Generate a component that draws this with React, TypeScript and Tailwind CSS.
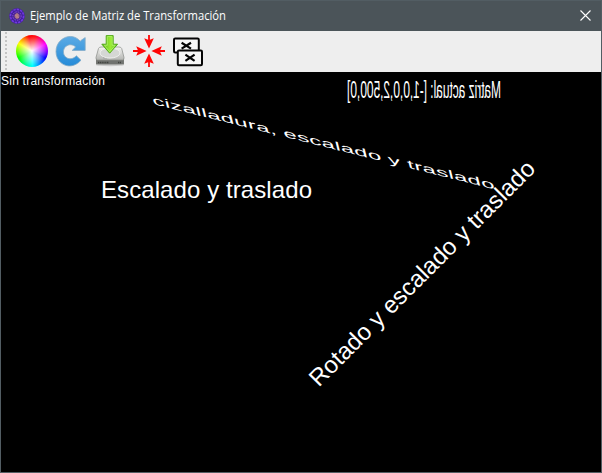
import React from "react";

type Label = { text: string; matrix: string; length: number };

// Each caption is drawn at (0, 13) in its own transformed space.
const labels: Label[] = [
  { text: "Sin transformación", matrix: "matrix(1 0 0 1 0 0)", length: 104 },
  { text: "Escalado y traslado", matrix: "matrix(2 0 0 2 100 100)", length: 105.5 },
  { text: "Rotado y escalado y traslado", matrix: "matrix(1.4142 -1.4142 1.4142 1.4142 299.5 297.5)", length: 154 },
  { text: "cizalladura, escalado y traslado", matrix: "matrix(2 0.5 0.25 1 149 19)", length: 171 },
  { text: "Matriz actual: [-1,0,0,2,500,0]", matrix: "matrix(-1 0 0 2 500 0)", length: 154 },
];

function AppIcon() {
  return (
    <svg className="h-4 w-4" viewBox="0 0 16 16">
      <circle cx="8" cy="8" r="7.8" fill="#42209c" />
      <circle cx="8" cy="8" r="6.6" fill="none" stroke="#7138e0" strokeWidth="1.6" strokeDasharray="2.4 1" />
      <circle cx="8" cy="8" r="4.2" fill="#4b2790" stroke="#8a4be0" strokeWidth="1" strokeDasharray="1.5 1" />
      <circle cx="8" cy="8" r="2.5" fill="#a46b8c" />
      <path d="M8 5v6M6 7l4 3" stroke="#c08a80" strokeWidth=".9" />
    </svg>
  );
}

function ColorWheel() {
  return (
    <div className="h-8 w-8 rounded-full bg-[radial-gradient(circle,#ffffff_0%,#ffffffb0_20%,#ffffff00_66%),conic-gradient(from_-12deg,#ff0000_0deg,#ff1010_24deg,#ff0090_50deg,#ff00ff_75deg,#8000ff_105deg,#0000ff_130deg,#0080ff_160deg,#00ffff_190deg,#00ff90_220deg,#00ff00_255deg,#80ff00_285deg,#ffff00_312deg,#ff8000_338deg,#ff0000_360deg)]" />
  );
}

function RedoIcon() {
  return (
    <svg className="h-8 w-8" viewBox="0 0 32 32">
      <defs>
        <linearGradient id="redo" x1="0" y1="0" x2="0" y2="1">
          <stop offset="0" stopColor="#5baae4" />
          <stop offset="1" stopColor="#258bd8" />
        </linearGradient>
      </defs>
      <path
        d="M26.3 5.2 30.2 2.6V15.4H17.2L20.6 12C18 9.2 13.9 9 11 11.3C7.6 14.2 7.6 19.6 11 22.3C14.1 24.7 18.4 24 21.4 20.8L26 25.2C20.3 32 11.6 32.6 6 27.8C-.6 22.3-.6 11.3 5.6 5.5C11.6-.1 20.1.1 25.2 6.2Z"
        fill="url(#redo)"
        stroke="#83abc6"
        strokeWidth=".8"
      />
    </svg>
  );
}

function DriveIcon() {
  return (
    <svg className="h-8 w-8" viewBox="0 0 32 32">
      <defs>
        <linearGradient id="drive" x1="0" y1="0" x2="0" y2="1">
          <stop offset="0" stopColor="#f5f5f3" />
          <stop offset="1" stopColor="#b4b5b2" />
        </linearGradient>
        <linearGradient id="arrow" x1="0" y1="0" x2="1" y2="0">
          <stop offset="0" stopColor="#58b515" />
          <stop offset=".55" stopColor="#9aeb35" />
          <stop offset="1" stopColor="#61c51a" />
        </linearGradient>
      </defs>
      <ellipse cx="16" cy="30" rx="14" ry="1.2" fill="#cacaca" />
      <path d="M6.5 12.5H25.5L30 24V29.5H2V24Z" fill="#7c7e7b" />
      <path d="M7 12H25Q27 12 27.7 13.5L30 22.5Q30.3 25 28.5 25H3.5Q1.7 25 2 22.5L4.5 13.5Q5.2 12 7 12Z" fill="url(#drive)" stroke="#929491" strokeWidth=".8" />
      <ellipse cx="16" cy="18" rx="10" ry="5" fill="#d5d7d4" stroke="#eeeeec" />
      <path d="M10 22Q8 24 13 24" fill="none" stroke="#a9aaa8" />
      <path d="M2.5 25.5H29.5V29H2.5Z" fill="#70726f" />
      <path d="M4 27.5H15M24 27.5H27" stroke="#41433f" strokeWidth="1.4" strokeDasharray="1.2 .6" />
      <path d="M12.2 .6H19.2V9.2H23.6L15.7 18.2 7.8 9.2H12.2Z" fill="url(#arrow)" stroke="#4ca414" strokeWidth=".9" />
      <path d="M13.3 1.6H18.1V10.3H21.2L15.7 16.7 10.3 10.3H13.3Z" fill="none" stroke="#b7f576" strokeWidth=".7" />
    </svg>
  );
}

function CollapseIcon() {
  return (
    <svg className="h-8 w-8" viewBox="0 0 32 32" fill="#ff0505">
      {[0, 90, 180, 270].map((angle) => (
        <path key={angle} transform={`rotate(${angle} 16 16)`} d="M15.1 0H16.9V4.8L20.8 3.2 16 13.6 11.2 3.2 15.1 4.8Z" />
      ))}
    </svg>
  );
}

function LayersIcon() {
  return (
    <svg className="h-8 w-8" viewBox="0 0 32 32" fill="#f7f7f7" stroke="#050505" strokeWidth="2">
      <rect x="2" y="3.5" width="24.8" height="14" rx="1.2" />
      <path d="M9.6 7.8 19 13.6M19 7.8 9.6 13.6" strokeWidth="2.2" />
      <rect x="5.8" y="15.6" width="24.2" height="14.6" rx="1.2" />
      <path d="M13.4 19.6 22.6 25.8M22.6 19.6 13.4 25.8" strokeWidth="2.2" />
    </svg>
  );
}

export default function App() {
  return (
    <div className="flex h-[473px] w-[602px] flex-col overflow-hidden border border-[#525d63] bg-black font-['Liberation_Sans',Arial,sans-serif]">
      <header className="flex h-[30px] shrink-0 items-center bg-[#4b5459] pl-2">
        <AppIcon />
        <svg className="ml-[5px] h-[30px] w-[220px] overflow-visible">
          <text x="0" y="19" textLength="196" lengthAdjust="spacingAndGlyphs" className="fill-white font-['Open_Sans','Noto_Sans',sans-serif] text-[12px]">
            Ejemplo de Matriz de Transformación
          </text>
        </svg>
        <svg className="mb-px ml-auto mr-2.5 h-[11px] w-[11px]" viewBox="0 0 11 11" stroke="#fff" strokeWidth="1.1">
          <path d="M.5.5 10.5 10.5M10.5.5.5 10.5" />
        </svg>
      </header>
      <div className="flex h-[41px] shrink-0 items-start bg-[#eeeeee]">
        <svg className="h-[41px] w-[14px] shrink-0">
          <path d="M5 1V41" stroke="#c4c4c4" strokeWidth="2" strokeDasharray="2 2" />
        </svg>
        <div className="flex gap-[7px] pl-px pt-1">
          <ColorWheel />
          <RedoIcon />
          <DriveIcon />
          <CollapseIcon />
          <LayersIcon />
        </div>
      </div>
      <svg className="h-[400px] w-[600px] shrink-0 bg-black" viewBox="0 0 600 400" fill="#fff">
        {labels.map((label) => (
          <text key={label.text} x="0" y="13" transform={label.matrix} textLength={label.length} className="text-[12px]">
            {label.text}
          </text>
        ))}
      </svg>
    </div>
  );
}
